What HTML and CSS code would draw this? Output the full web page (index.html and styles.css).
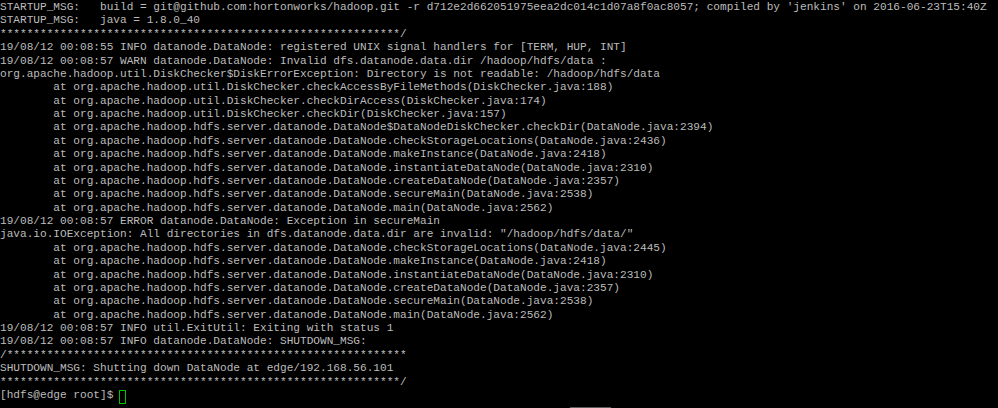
FILE: index.html
```html
<!DOCTYPE html>
<html>
<head>
<meta charset="utf-8">
<link rel="stylesheet" href="styles.css">
</head>
<body>
<div class="term">
<pre class="out">STARTUP_MSG:   build = git@github.com:hortonworks/hadoop.git -r d712e2d662051975eea2dc014c1d07a8f0ac8057; compiled by 'jenkins' on 2016-06-23T15:40Z
STARTUP_MSG:   java = 1.8.0_40
************************************************************/
19/08/12 00:08:55 INFO datanode.DataNode: registered UNIX signal handlers for [TERM, HUP, INT]
19/08/12 00:08:57 WARN datanode.DataNode: Invalid dfs.datanode.data.dir /hadoop/hdfs/data :
org.apache.hadoop.util.DiskChecker$DiskErrorException: Directory is not readable: /hadoop/hdfs/data
        at org.apache.hadoop.util.DiskChecker.checkAccessByFileMethods(DiskChecker.java:188)
        at org.apache.hadoop.util.DiskChecker.checkDirAccess(DiskChecker.java:174)
        at org.apache.hadoop.util.DiskChecker.checkDir(DiskChecker.java:157)
        at org.apache.hadoop.hdfs.server.datanode.DataNode$DataNodeDiskChecker.checkDir(DataNode.java:2394)
        at org.apache.hadoop.hdfs.server.datanode.DataNode.checkStorageLocations(DataNode.java:2436)
        at org.apache.hadoop.hdfs.server.datanode.DataNode.makeInstance(DataNode.java:2418)
        at org.apache.hadoop.hdfs.server.datanode.DataNode.instantiateDataNode(DataNode.java:2310)
        at org.apache.hadoop.hdfs.server.datanode.DataNode.createDataNode(DataNode.java:2357)
        at org.apache.hadoop.hdfs.server.datanode.DataNode.secureMain(DataNode.java:2538)
        at org.apache.hadoop.hdfs.server.datanode.DataNode.main(DataNode.java:2562)
19/08/12 00:08:57 ERROR datanode.DataNode: Exception in secureMain
java.io.IOException: All directories in dfs.datanode.data.dir are invalid: "/hadoop/hdfs/data/"
        at org.apache.hadoop.hdfs.server.datanode.DataNode.checkStorageLocations(DataNode.java:2445)
        at org.apache.hadoop.hdfs.server.datanode.DataNode.makeInstance(DataNode.java:2418)
        at org.apache.hadoop.hdfs.server.datanode.DataNode.instantiateDataNode(DataNode.java:2310)
        at org.apache.hadoop.hdfs.server.datanode.DataNode.createDataNode(DataNode.java:2357)
        at org.apache.hadoop.hdfs.server.datanode.DataNode.secureMain(DataNode.java:2538)
        at org.apache.hadoop.hdfs.server.datanode.DataNode.main(DataNode.java:2562)
19/08/12 00:08:57 INFO util.ExitUtil: Exiting with status 1
19/08/12 00:08:57 INFO datanode.DataNode: SHUTDOWN_MSG:
/************************************************************
SHUTDOWN_MSG: Shutting down DataNode at edge/192.168.56.101
************************************************************/
[hdfs@edge root]$ <span class="cursor"> </span></pre>
<div class="scrollbar"><span class="thumb"></span></div>
</div>
</body>
</html>
```
FILE: styles.css
```css
html, body {
  margin: 0;
  padding: 0;
  background: #000;
}
.term {
  width: 998px;
  height: 408px;
  background: #000;
  display: flex;
  flex-direction: column;
  overflow: hidden;
}
.out {
  margin: 0;
  padding: 1px 0 0 0;
  font-family: "Liberation Mono", "DejaVu Sans Mono", monospace;
  font-size: 11.12px;
  line-height: 13.38px;
  color: #bcbcbc;
  white-space: pre;
  flex: 1;
}
.cursor {
  display: inline-block;
  width: 5px;
  height: 12px;
  margin-left: -1px;
  border: 1px solid #00c000;
  vertical-align: -2px;
}
.scrollbar {
  height: 1px;
  display: flex;
  padding-left: 570px;
}
.thumb {
  width: 41px;
  height: 1px;
  background: #5a5a5a;
}
```
